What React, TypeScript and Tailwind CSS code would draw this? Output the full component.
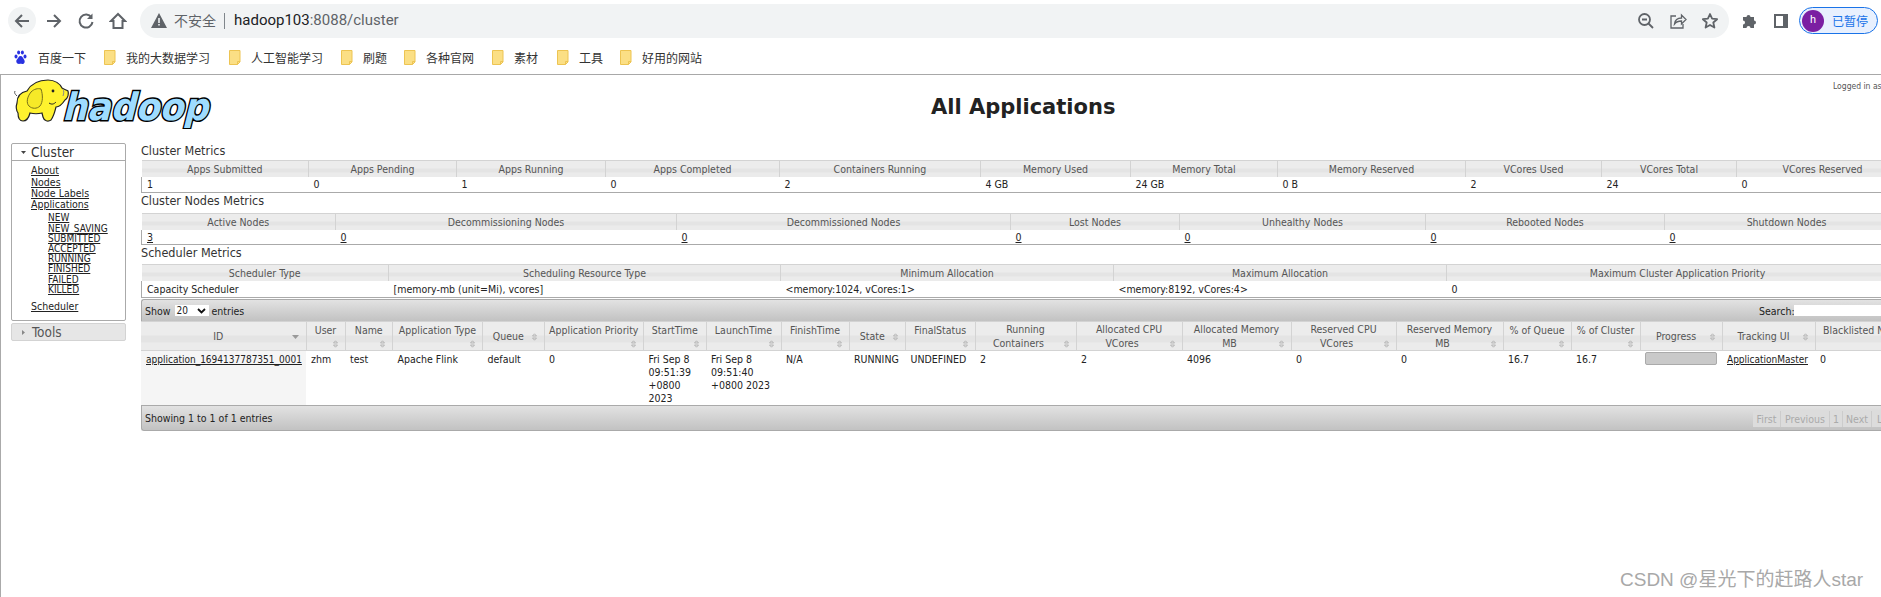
import React from "react";

const F = "font-['DejaVu_Sans_Condensed','Noto_Sans',sans-serif]";
const CJK = "font-['Noto_Sans_CJK_SC',sans-serif]";

function Folder() {
  return (
    <svg width="12" height="15" viewBox="0 0 12 15" className="shrink-0">
      <path d="M.5.5h10.500v11.500l-2.500 2.500H.5z" fill="#fbdf85" stroke="#edc452" />
      <path d="M11 11.500H8.500v3" fill="none" stroke="#edc452" />
    </svg>
  );
}

function Bookmark({ label, className }: { label: string; className: string }) {
  return (
    <div className={"flex items-center gap-[10px] " + className}>
      <Folder />
      <span className={CJK + " text-[12px] text-[#333] whitespace-nowrap"}>{label}</span>
    </div>
  );
}

function TopBar() {
  return (
    <div className="h-[75px] border-b border-[#a8a8a8] bg-white">
      <div className="h-[41px] flex items-center">
        <div className="ml-[8px] w-[28px] h-[27px] rounded-full bg-[#f1f3f4] flex items-center justify-center">
          <svg width="18" height="18" viewBox="0 0 18 18" fill="none" stroke="#5f6368" strokeWidth="2"><path d="M16 9H3M9 3 3 9l6 6" /></svg>
        </div>
        <svg className="ml-[9px]" width="18" height="18" viewBox="0 0 18 18" fill="none" stroke="#5f6368" strokeWidth="2"><path d="M2 9h13M9 3l6 6-6 6" /></svg>
        <svg className="ml-[14px]" width="18" height="18" viewBox="0 0 18 18" fill="none" stroke="#5f6368" strokeWidth="2"><path d="M14.500 5.500A6.500 6.500 0 1 0 15.500 10" /><path d="M15.500 1.500v5.500H10z" fill="#5f6368" stroke="none" /></svg>
        <svg className="ml-[14px]" width="18" height="18" viewBox="0 0 18 18" fill="none" stroke="#5f6368" strokeWidth="2"><path d="M9 2 2 9h2.500v7h9V9H16z" strokeLinejoin="miter" /></svg>
        <div className="ml-[13px] w-[1589px] h-[34px] rounded-full bg-[#f1f3f4] flex items-center">
          <svg className="ml-[11px]" width="16" height="15" viewBox="0 0 16 15"><path d="M8 0 16 15H0z" fill="#5f6368" /><path d="M7.200 5h1.600v5H7.200zM7.200 11h1.600v1.600H7.200z" fill="#f1f3f4" /></svg>
          <span className={CJK + " ml-[7px] text-[14px] text-[#5f6368] whitespace-nowrap w-[43px]"}>不安全</span>
          <div className="ml-[7px] w-px h-[16px] bg-[#80868b]" />
          <span className="ml-[9px] font-['Roboto',sans-serif] text-[15px] whitespace-nowrap">
            <span className="text-[#202124]">hadoop103</span><span className="text-[#5f6368]">:8088/cluster</span>
          </span>
          <div className="ml-auto mr-[10px] flex items-center gap-[14px]">
            <svg width="18" height="18" viewBox="0 0 18 18" fill="none" stroke="#5f6368" strokeWidth="1.800"><circle cx="7.500" cy="7.500" r="5.500" /><path d="M11.500 11.500 16 16M5 7.500h5" /></svg>
            <svg width="18" height="18" viewBox="0 0 18 18" fill="none" stroke="#5f6368" strokeWidth="1.300"><path d="M7 4H2v12h12v-4" /><path d="M5.500 12c.5-4 3.500-6 7-6V3l4.500 4.500L12.500 12V9c-3 0-5.500 1-7 3z" /></svg>
            <svg width="18" height="18" viewBox="0 0 18 18" fill="none" stroke="#5f6368" strokeWidth="1.800"><path d="m9 2 2.100 4.700 5 .5-3.800 3.300 1.100 5L9 13l-4.400 2.500 1.100-5L1.900 7.200l5-.5z" strokeLinejoin="round" /></svg>
          </div>
        </div>
        <svg className="ml-[13px]" width="16" height="16" viewBox="0 0 16 16"><path d="M1 4h3.500a2 2 0 1 1 4 0H12v3.500a2 2 0 1 1 0 4V15H8.500a2 2 0 1 0-4 0H1v-3.500a2 2 0 1 0 0-4z" fill="#5f6368" /></svg>
        <svg className="ml-[16px]" width="14" height="14" viewBox="0 0 14 14"><path d="M0 0h14v14H0z" fill="#5f6368" /><path d="M2 2h7v10H2z" fill="#fff" /></svg>
        <div className="ml-[11px] w-[79px] h-[27px] rounded-full border border-[#1a73e8] bg-[#e8f0fe] flex items-center">
          <div className="ml-[2px] w-[22px] h-[22px] rounded-full bg-[#7b1fa2] text-white text-[11px] font-['Roboto',sans-serif] flex items-center justify-center">h</div>
          <span className={CJK + " ml-[8px] text-[12px] text-[#1a73e8] whitespace-nowrap"}>已暂停</span>
        </div>
      </div>
      <div className="h-[33px] flex items-center">
        <div className="ml-[14px] flex items-center gap-[11px] w-[90px]">
          <svg width="13" height="15" viewBox="0 0 13 15" fill="#2932e1">
            <ellipse cx="2" cy="6.500" rx="1.500" ry="2" /><ellipse cx="4.600" cy="2.500" rx="1.500" ry="2" /><ellipse cx="8.400" cy="2.500" rx="1.500" ry="2" /><ellipse cx="11" cy="6.500" rx="1.500" ry="2" />
            <path d="M6.500 6c-2 0-2 2-3.500 3.500S2.500 14 5 14c1 0 2-.5 3 0 2.500.5 3.500-2.500 2-4.500S8.500 6 6.500 6z" />
          </svg>
          <span className={CJK + " text-[12px] text-[#333] whitespace-nowrap"}>百度一下</span>
        </div>
        <Bookmark label="我的大数据学习" className="w-[125px]" />
        <Bookmark label="人工智能学习" className="w-[112px]" />
        <Bookmark label="刷题" className="w-[63px]" />
        <Bookmark label="各种官网" className="w-[88px]" />
        <Bookmark label="素材" className="w-[65px]" />
        <Bookmark label="工具" className="w-[63px]" />
        <Bookmark label="好用的网站" className="w-[90px]" />
      </div>
    </div>
  );
}

function Logo() {
  return (
    <svg width="200" height="50" viewBox="0 0 200 50" className="shrink-0">
      <g transform="translate(49 41) skewX(-14)">
        <text x="0" y="0" textLength="146" lengthAdjust="spacingAndGlyphs" fontFamily="'DejaVu Sans', sans-serif" fontWeight="700" fontSize="38" fill="#9edcff" stroke="#000" strokeWidth="3" paintOrder="stroke">hadoop</text>
      </g>
      <path d="M4 17C2 15 1 14 2 12" fill="none" stroke="#555" strokeWidth="1" />
      <path d="M4 24C4 16 9 13 14 12 18 5 26 1 35 1 42 1 47 5 49 9 52 11 54 11 55 12 56 15 55 19 52 21 50 24 47 28 43 28 42 32 41 37 38 41 35 43 31 42 30 38L29 34C25 35 21 35 17 34 16 38 14 42 10 42 6 42 5 38 5 34 3 31 3 27 4 24Z" fill="#fff22e" stroke="#222" strokeWidth="1.200" />
      <path d="M18 13C14 18 13 24 16 27 19 30 24 30 27 27 30 23 30 16 28 10 25 9 21 10 18 13Z" fill="#f6e928" stroke="#77701a" strokeWidth="1" />
      <circle cx="40" cy="12" r="1.400" fill="#222" />
      <path d="M36 24c3 2 5 1 7-1" fill="none" stroke="#222" strokeWidth="1" />
      <path d="M50 10c1 2 1 4 0 7" fill="none" stroke="#888" strokeWidth="1" />
    </svg>
  );
}

function PageHeader() {
  return (
    <div className="relative h-[68px] flex">
      <div className="ml-[12px] mt-[4px]"><Logo /></div>
      <h1 className="absolute left-[930px] top-[17px] w-[185px] font-['DejaVu_Sans',sans-serif] font-bold text-[21px] text-[#222] whitespace-nowrap">All Applications</h1>
      <div className={F + " absolute left-[1832px] top-[5px] text-[8.500px] text-[#555] whitespace-nowrap"}>Logged in as: dr.who</div>
    </div>
  );
}

function NavLink({ children, className }: { children: React.ReactNode; className: string }) {
  return <a className={"block underline text-[#222] leading-[11px] " + className}>{children}</a>;
}

function Sidebar() {
  return (
    <div className={F + " w-[115px] ml-[10px] shrink-0 text-[10.500px]"}>
      <div className="border border-[#aaa] rounded-[2px] h-[178px]">
        <div className="h-[17px] border-b border-[#aaa] flex items-center text-[13.500px] text-[#333]">
          <svg className="ml-[9px]" width="5" height="3" viewBox="0 0 5 3"><path d="M0 0h5L2.500 3z" fill="#444" /></svg>
          <span className="ml-[5px]">Cluster</span>
        </div>
        <div className="pl-[19px] pt-[3px]">
          <NavLink className="h-[13px] leading-[13px]">About</NavLink>
          <NavLink className="h-[11px]">Nodes</NavLink>
          <NavLink className="h-[11px]">Node Labels</NavLink>
          <NavLink className="h-[11px]">Applications</NavLink>
          <div className="pl-[17px] pt-[2px] text-[10px]">
            <NavLink className="h-[10.500px] leading-[10.500px]">NEW</NavLink>
            <NavLink className="h-[10.500px] leading-[10.500px]">NEW_SAVING</NavLink>
            <NavLink className="h-[10px] leading-[10px]">SUBMITTED</NavLink>
            <NavLink className="h-[10px] leading-[10px]">ACCEPTED</NavLink>
            <NavLink className="h-[10px] leading-[10px]">RUNNING</NavLink>
            <NavLink className="h-[10.500px] leading-[10.500px]">FINISHED</NavLink>
            <NavLink className="h-[10px] leading-[10px]">FAILED</NavLink>
            <NavLink className="h-[10px] leading-[10px]">KILLED</NavLink>
          </div>
          <NavLink className="mt-[7px] h-[11px]">Scheduler</NavLink>
        </div>
      </div>
      <div className="mt-[2px] h-[18px] border border-[#d3d3d3] rounded-[2px] bg-[#e6e6e6] flex items-center text-[13.500px] text-[#555]">
        <svg className="ml-[10px]" width="3" height="5" viewBox="0 0 3 5"><path d="M0 0v5l3-2.500z" fill="#888" /></svg>
        <span className="ml-[7px]">Tools</span>
      </div>
    </div>
  );
}

const headCell = "bg-[linear-gradient(#ececec_0_45%,#e4e4e4_45%_70%,#ebebeb_70%)] border-r border-[#d3d3d3] font-normal text-[#555] text-center p-0";

function Metric({ cols, heads, cells, hClass, rClass }: { cols: string[]; heads: string[]; cells: React.ReactNode[]; hClass: string; rClass: string }) {
  return (
    <table className="table-fixed w-[1767px] border-collapse leading-[14px]">
      <colgroup>{cols.map((c, i) => <col key={i} className={c} />)}</colgroup>
      <thead>
        <tr className={hClass}>{heads.map((h) => <th key={h} className={headCell + " border-t border-t-[#d3d3d3]"}>{h}</th>)}</tr>
      </thead>
      <tbody>
        <tr className={rClass}>
          {cells.map((c, i) => <td key={i} className={"pl-[5px] p-0 text-[#222] border-b border-b-[#aaa] whitespace-nowrap" + (i === 0 ? " border-l border-l-[#aaa]" : "")}>{c}</td>)}
        </tr>
      </tbody>
    </table>
  );
}

function Sort({ mode }: { mode: "mid" | "low" | "desc" }) {
  if (mode === "desc") {
    return <svg className="absolute right-[7px] top-[13px]" width="7" height="4" viewBox="0 0 7 4"><path d="M0 0h7L3.500 4z" fill="#999" /></svg>;
  }
  return (
    <svg className={"absolute right-[7px] " + (mode === "mid" ? "top-[11px]" : "top-[18px]")} width="5" height="8" viewBox="0 0 5 8" fill="none" stroke="#aaa" strokeWidth="0.800">
      <path d="M.5 3 2.500.8 4.500 3zM.5 5l2 2.200 2-2.200z" />
    </svg>
  );
}

type Col = { c: string; t: React.ReactNode; m: "mid" | "low" | "desc"; tc: string };
const dtCols: Col[] = [
  { c: "w-[165px]", t: "ID", m: "desc", tc: "pr-[10px]" },
  { c: "w-[39px]", t: "User", m: "low", tc: "pb-[12px]" },
  { c: "w-[47.500px]", t: "Name", m: "low", tc: "pb-[12px]" },
  { c: "w-[90px]", t: "Application Type", m: "low", tc: "pb-[12px]" },
  { c: "w-[61.500px]", t: "Queue", m: "mid", tc: "pr-[10px]" },
  { c: "w-[99.500px]", t: "Application Priority", m: "low", tc: "pb-[12px]" },
  { c: "w-[62.500px]", t: "StartTime", m: "low", tc: "pb-[12px]" },
  { c: "w-[75px]", t: "LaunchTime", m: "low", tc: "pb-[12px]" },
  { c: "w-[68px]", t: "FinishTime", m: "low", tc: "pb-[12px]" },
  { c: "w-[56.500px]", t: "State", m: "mid", tc: "pr-[10px]" },
  { c: "w-[69.500px]", t: "FinalStatus", m: "low", tc: "pb-[12px]" },
  { c: "w-[101px]", t: <>Running<br /><span className="pr-[14px]">Containers</span></>, m: "low", tc: "" },
  { c: "w-[106px]", t: <>Allocated CPU<br /><span className="pr-[14px]">VCores</span></>, m: "low", tc: "" },
  { c: "w-[109px]", t: <>Allocated Memory<br /><span className="pr-[14px]">MB</span></>, m: "low", tc: "" },
  { c: "w-[105px]", t: <>Reserved CPU<br /><span className="pr-[14px]">VCores</span></>, m: "low", tc: "" },
  { c: "w-[107px]", t: <>Reserved Memory<br /><span className="pr-[14px]">MB</span></>, m: "low", tc: "" },
  { c: "w-[68px]", t: "% of Queue", m: "low", tc: "pb-[12px]" },
  { c: "w-[69px]", t: "% of Cluster", m: "low", tc: "pb-[12px]" },
  { c: "w-[82px]", t: "Progress", m: "mid", tc: "pr-[10px]" },
  { c: "w-[93px]", t: "Tracking UI", m: "mid", tc: "pr-[10px]" },
  { c: "w-[100px]", t: "Blacklisted Nodes", m: "low", tc: "pb-[12px]" },
];

const dtCells: React.ReactNode[] = [
  <a className="underline text-[10px]">application_1694137787351_0001</a>,
  "zhm", "test", "Apache Flink", "default", "0",
  <>Fri Sep 8<br />09:51:39<br />+0800<br />2023</>,
  <>Fri Sep 8<br />09:51:40<br />+0800 2023</>,
  "N/A", "RUNNING", "UNDEFINED", "2", "2", "4096", "0", "0", "16.7", "16.7",
  <div className="w-[72px] h-[13px] mt-[-1px] bg-[#c9c9c9] border border-[#aaa] rounded-[2px]" />,
  <a className="underline text-[10px]">ApplicationMaster</a>,
  "0",
];

const barClass = "bg-[linear-gradient(#e2e2e2,#c2c2c2)] border-t border-[#aaa] flex items-center relative";

function AppsTable() {
  return (
    <div className="mt-[1px] w-[1774px] leading-[14px]">
      <div className={barClass + " h-[22px] border-l rounded-t-[3px]"}>
        <span className="ml-[3px] text-[#222]">Show</span>
        <span className="ml-[4px] w-[34px] h-[11px] bg-white flex items-center justify-between pl-[2px] pr-[3px] text-[10px] text-[#222]">
          20
          <svg width="9" height="6" viewBox="0 0 9 6" fill="none" stroke="#111" strokeWidth="1.800"><path d="m1 1 3.500 3.500L8 1" /></svg>
        </span>
        <span className="ml-[3px] text-[#222]">entries</span>
        <span className="absolute left-[1617px] text-[#222]">Search:</span>
        <span className="absolute left-[1652px] w-[120px] h-[11px] bg-white" />
      </div>
      <table className="table-fixed w-[1774px] border-collapse">
        <colgroup>{dtCols.map((d, i) => <col key={i} className={d.c} />)}</colgroup>
        <thead>
          <tr className="h-[29px] leading-[14px]">
            {dtCols.map((d, i) => (
              <th key={i} className={headCell + " relative border-t border-b border-[#d3d3d3] whitespace-nowrap"}>
                <div className={d.tc}>{d.t}</div>
                <Sort mode={d.m} />
              </th>
            ))}
          </tr>
        </thead>
        <tbody>
          <tr className="h-[54px] leading-[13px] align-top text-[#222]">
            {dtCells.map((c, i) => (
              <td key={i} className={"pl-[5px] pt-[2px] p-0 whitespace-nowrap" + (i === 0 ? " bg-[#f5f5f5]" : "")}>{c}</td>
            ))}
          </tr>
        </tbody>
      </table>
      <div className={barClass + " h-[26px] border-l rounded-b-[3px] border-b"}>
        <span className="ml-[3px] text-[#222]">Showing 1 to 1 of 1 entries</span>
        <div className="absolute left-[1611px] top-[5px] h-[16px] flex text-[#aaa] bg-[#dcdcdc]">
          <span className="w-[28px] text-center border-r border-[#ccc] leading-[16px]">First</span>
          <span className="w-[49px] text-center border-r border-[#ccc] leading-[16px]">Previous</span>
          <span className="w-[13px] text-center border-r border-[#ccc] leading-[16px]">1</span>
          <span className="w-[29px] text-center border-r border-[#ccc] leading-[16px]">Next</span>
          <span className="w-[29px] pl-[5px] leading-[16px]">Last</span>
        </div>
      </div>
    </div>
  );
}

function Main() {
  return (
    <div className={F + " ml-[15px] text-[10.500px] shrink-0"}>
      <div className="h-[17px] leading-[15px] text-[12.500px] text-[#333]">Cluster Metrics</div>
      <Metric
        hClass="h-[16px]" rClass="h-[16px]"
        cols={["w-[167px]", "w-[148px]", "w-[149px]", "w-[174px]", "w-[201px]", "w-[150px]", "w-[147px]", "w-[188px]", "w-[136px]", "w-[135px]", "w-[172px]"]}
        heads={["Apps Submitted", "Apps Pending", "Apps Running", "Apps Completed", "Containers Running", "Memory Used", "Memory Total", "Memory Reserved", "VCores Used", "VCores Total", "VCores Reserved"]}
        cells={["1", "0", "1", "0", "2", "4 GB", "24 GB", "0 B", "2", "24", "0"]}
      />
      <div className="h-[20px] leading-[16px] text-[12.500px] text-[#333]">Cluster Nodes Metrics</div>
      <Metric
        hClass="h-[16px]" rClass="h-[15px]"
        cols={["w-[194px]", "w-[341px]", "w-[334px]", "w-[169px]", "w-[246px]", "w-[239px]", "w-[244px]"]}
        heads={["Active Nodes", "Decommissioning Nodes", "Decommissioned Nodes", "Lost Nodes", "Unhealthy Nodes", "Rebooted Nodes", "Shutdown Nodes"]}
        cells={["3", "0", "0", "0", "0", "0", "0"].map((v, i) => <a key={i} className="underline">{v}</a>)}
      />
      <div className="h-[19px] leading-[16px] text-[12.500px] text-[#333]">Scheduler Metrics</div>
      <Metric
        hClass="h-[16px]" rClass="h-[17px]"
        cols={["w-[247px]", "w-[392px]", "w-[333px]", "w-[333px]", "w-[462px]"]}
        heads={["Scheduler Type", "Scheduling Resource Type", "Minimum Allocation", "Maximum Allocation", "Maximum Cluster Application Priority"]}
        cells={["Capacity Scheduler", "[memory-mb (unit=Mi), vcores]", "<memory:1024, vCores:1>", "<memory:8192, vCores:4>", "0"]}
      />
      <AppsTable />
    </div>
  );
}

export default function App() {
  return (
    <div className="relative w-[1881px] h-[597px] overflow-hidden bg-white">
      <TopBar />
      <div className="border-l border-[#aaa] h-[522px] overflow-hidden">
        <PageHeader />
        <div className="flex">
          <Sidebar />
          <Main />
        </div>
      </div>
      <div className="absolute left-[1620px] top-[566px] text-[19px] text-[#a8a8a8] whitespace-nowrap font-['Liberation_Sans','Noto_Sans_CJK_SC',sans-serif]">CSDN @星光下的赶路人star</div>
    </div>
  );
}
